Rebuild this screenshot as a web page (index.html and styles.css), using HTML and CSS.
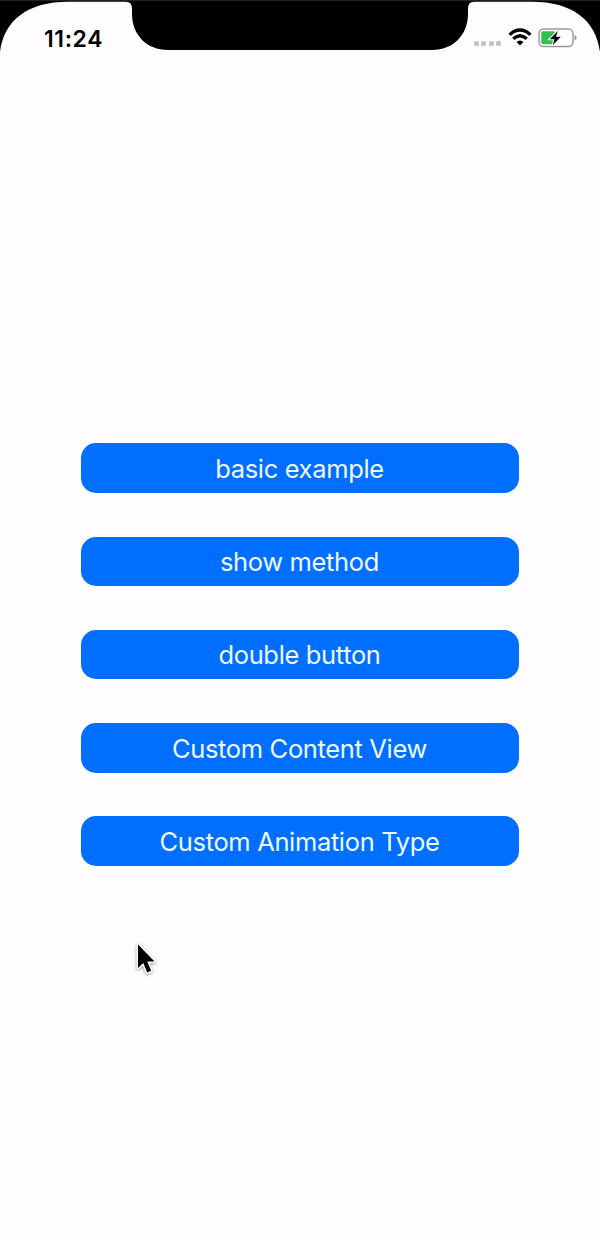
FILE: index.html
```html
<!DOCTYPE html>
<html lang="en">
<head>
<meta charset="utf-8">
<title>Examples</title>
<link rel="stylesheet" href="styles.css">
</head>
<body>
<div class="screen">
  <svg class="bezel" viewBox="0 0 600 54" aria-hidden="true">
    <path d="M0 0H600V52C596 20 572 1.700 532 1.700H474Q468 1.700 468 9V14C468 35 453 50 432 50H168C147 50 132 35 132 14V9Q132 1.700 126 1.700H68C28 1.700 4 20 0 52Z" fill="#000"/>
    <path d="M0 .5H600" stroke="#222"/>
  </svg>
  <header class="status-bar">
    <time class="clock">11:24</time>
    <div class="indicators">
      <div class="signal"><i></i><i></i><i></i><i></i></div>
      <svg class="wifi" viewBox="0 0 24 18" aria-hidden="true">
        <g fill="none" stroke="#000" stroke-width="3.300">
          <path d="M1.600 6.700Q12 -2.700 22.400 6.700"/>
          <path d="M5.300 10.800Q12 4.700 18.700 10.800"/>
        </g>
        <path d="M8.500 14Q12 10.800 15.500 14L12 17.500Z"/>
      </svg>
      <svg class="battery" viewBox="0 0 40 20" aria-hidden="true">
        <rect x="1" y="1" width="34" height="17.500" rx="4.500" fill="#fff" stroke="#999" stroke-width="1.400"/>
        <rect x="3.300" y="3.300" width="14" height="13" rx="1.800" fill="#30c04f"/>
        <path d="M36.500 7Q38.700 8 38.700 9.800T36.500 12.500Z" fill="#999"/>
        <path d="M19.800 3L11.800 11.200H16.500L14.800 17.300L22.800 8.700H18Z" fill="#000" stroke="#fff" stroke-width="2.200" paint-order="stroke"/>
      </svg>
    </div>
  </header>
  <main class="actions">
    <button class="action">basic example</button>
    <button class="action">show method</button>
    <button class="action">double button</button>
    <button class="action">Custom Content View</button>
    <button class="action">Custom Animation Type</button>
  </main>
  <svg class="cursor" viewBox="0 0 30 40" aria-hidden="true">
    <path d="M3 3.500V27L8.300 22L12.200 31.500L16.200 29.800L12.200 20.600H19.500Z" fill="#000" stroke="#fff" stroke-width="3" paint-order="stroke" stroke-linejoin="round"/>
  </svg>
</div>
</body>
</html>
```
FILE: styles.css
```css
body {
  margin: 0;
  background: #fffdff;
  font-family: Inter, "Liberation Sans", sans-serif;
}
.screen {
  position: relative;
  height: 1236px;
  overflow: hidden;
}
.bezel {
  position: absolute;
  top: 0;
  left: 0;
  width: 600px;
  height: 54px;
}
.status-bar {
  position: relative;
  box-sizing: border-box;
  height: 54px;
  padding: 24px 22px 0 44px;
  display: flex;
  justify-content: space-between;
  align-items: flex-start;
}
.clock {
  font-size: 23px;
  font-weight: 600;
  line-height: 30px;
  letter-spacing: .6px;
}
.indicators {
  display: flex;
  align-items: flex-start;
  padding-top: 4px;
}
.signal {
  display: flex;
  gap: 2.5px;
  margin: 13px 7px 0 0;
}
.signal i {
  width: 5px;
  height: 5px;
  border-radius: 1.5px;
  background: #c4c2c4;
}
.wifi {
  width: 24px;
  height: 18px;
  margin-right: 6px;
}
.battery {
  width: 40px;
  height: 20px;
}
.actions {
  display: flex;
  flex-direction: column;
  gap: 43.8px;
  padding: 389.3px 81px 0;
}
.action {
  height: 49.5px;
  padding: 1.5px 1px 0 0;
  border: 0;
  border-radius: 15px;
  background: #006eff;
  color: #eefaff;
  font-family: inherit;
  font-size: 25.5px;
  font-weight: 400;
  line-height: 32px;
  letter-spacing: -.35px;
}
.cursor {
  position: absolute;
  left: 135px;
  top: 941px;
  width: 30px;
  height: 40px;
  filter: drop-shadow(0 1.5px 1.5px rgba(0, 0, 0, .4));
}
```
